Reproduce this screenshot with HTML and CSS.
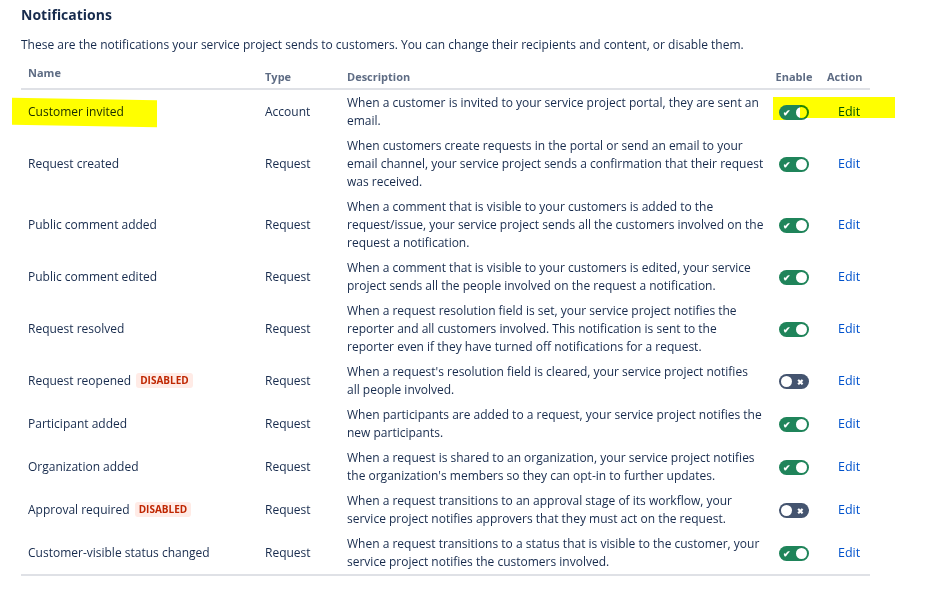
FILE: index.html
```html
<!DOCTYPE html>
<html>
<head>
  <title>Notifications</title>
  <link rel="stylesheet" href="styles.css">
</head>
<body>
  <div class="page">
    <h2 class="title">Notifications</h2>
    <p class="intro">These are the notifications your service project sends to customers. You can change their recipients and content, or disable them.</p>
    <table class="notif-table">
      <colgroup>
        <col class="col-name">
        <col class="col-type">
        <col class="col-desc">
        <col class="col-enable">
        <col class="col-action">
      </colgroup>
      <thead>
        <tr>
          <th class="th-name">Name</th>
          <th>Type</th>
          <th>Description</th>
          <th class="center">Enable</th>
          <th>Action</th>
        </tr>
      </thead>
      <tbody>
        <tr>
          <td class="marked"><span class="mark mark-name"></span>Customer invited</td>
          <td>Account</td>
          <td class="desc">When a customer is invited to your service project portal, they are sent an<br>email.</td>
          <td class="center marked"><span class="mark mark-toggle"></span><span class="toggle on"></span></td>
          <td class="marked"><span class="mark mark-edit"></span><a class="edit" href="#">Edit</a></td>
        </tr>
        <tr>
          <td>Request created</td>
          <td>Request</td>
          <td class="desc">When customers create requests in the portal or send an email to your<br>email channel, your service project sends a confirmation that their request<br>was received.</td>
          <td class="center"><span class="toggle on"></span></td>
          <td><a class="edit" href="#">Edit</a></td>
        </tr>
        <tr>
          <td>Public comment added</td>
          <td>Request</td>
          <td class="desc">When a comment that is visible to your customers is added to the<br>request/issue, your service project sends all the customers involved on the<br>request a notification.</td>
          <td class="center"><span class="toggle on"></span></td>
          <td><a class="edit" href="#">Edit</a></td>
        </tr>
        <tr>
          <td>Public comment edited</td>
          <td>Request</td>
          <td class="desc">When a comment that is visible to your customers is edited, your service<br>project sends all the people involved on the request a notification.</td>
          <td class="center"><span class="toggle on"></span></td>
          <td><a class="edit" href="#">Edit</a></td>
        </tr>
        <tr>
          <td>Request resolved</td>
          <td>Request</td>
          <td class="desc">When a request resolution field is set, your service project notifies the<br>reporter and all customers involved. This notification is sent to the<br>reporter even if they have turned off notifications for a request.</td>
          <td class="center"><span class="toggle on"></span></td>
          <td><a class="edit" href="#">Edit</a></td>
        </tr>
        <tr>
          <td>Request reopened <span class="badge">Disabled</span></td>
          <td>Request</td>
          <td class="desc">When a request's resolution field is cleared, your service project notifies<br>all people involved.</td>
          <td class="center"><span class="toggle off"></span></td>
          <td><a class="edit" href="#">Edit</a></td>
        </tr>
        <tr>
          <td>Participant added</td>
          <td>Request</td>
          <td class="desc">When participants are added to a request, your service project notifies the<br>new participants.</td>
          <td class="center"><span class="toggle on"></span></td>
          <td><a class="edit" href="#">Edit</a></td>
        </tr>
        <tr>
          <td>Organization added</td>
          <td>Request</td>
          <td class="desc">When a request is shared to an organization, your service project notifies<br>the organization's members so they can opt-in to further updates.</td>
          <td class="center"><span class="toggle on"></span></td>
          <td><a class="edit" href="#">Edit</a></td>
        </tr>
        <tr>
          <td>Approval required <span class="badge">Disabled</span></td>
          <td>Request</td>
          <td class="desc">When a request transitions to an approval stage of its workflow, your<br>service project notifies approvers that they must act on the request.</td>
          <td class="center"><span class="toggle off"></span></td>
          <td><a class="edit" href="#">Edit</a></td>
        </tr>
        <tr>
          <td>Customer-visible status changed</td>
          <td>Request</td>
          <td class="desc">When a request transitions to a status that is visible to the customer, your<br>service project notifies the customers involved.</td>
          <td class="center"><span class="toggle on"></span></td>
          <td><a class="edit" href="#">Edit</a></td>
        </tr>
      </tbody>
    </table>
  </div>
</body>
</html>
```

FILE: styles.css
```css
body {
  margin: 0;
  padding: 0;
  background-color: #ffffff;
  color: #172b4d;
  font-family: "Open Sans", "Noto Sans", sans-serif;
  font-size: 12px;
}

.page {
  padding: 5px 62px 0 21px;
}

.title {
  margin: 0;
  font-size: 14px;
  font-weight: 700;
  line-height: 20px;
}

.intro {
  margin: 11px 0 0 0;
  line-height: 18px;
}

.notif-table {
  margin-top: 7px;
  width: 849px;
  border-collapse: collapse;
  table-layout: fixed;
}

.col-name { width: 237px; }
.col-type { width: 82px; }
.col-desc { width: 428px; }
.col-enable { width: 52px; }
.col-action { width: 50px; }

.notif-table th {
  text-align: left;
  font-size: 11px;
  font-weight: 700;
  color: #5e6c84;
  padding: 4px 7px 3px 7px;
  line-height: 16px;
  border-bottom: 2px solid #dfe1e6;
  vertical-align: bottom;
}

.notif-table th.th-name {
  padding-bottom: 7px;
}

.notif-table td {
  padding: 4px 7px 3px 7px;
  line-height: 18px;
  vertical-align: middle;
  white-space: nowrap;
}

.notif-table tbody tr:last-child td {
  border-bottom: 2px solid #dfe1e6;
}

.notif-table .center {
  text-align: center;
}

.badge {
  display: inline-block;
  margin-left: 2px;
  padding: 0 4px;
  border-radius: 3px;
  background-color: #ffebe6;
  color: #bf2600;
  font-size: 10px;
  font-weight: 700;
  line-height: 15px;
  text-transform: uppercase;
  vertical-align: 1px;
}

.toggle {
  position: relative;
  display: inline-block;
  width: 30px;
  height: 15px;
  border-radius: 8px;
  vertical-align: middle;
}

.toggle::before {
  content: "";
  position: absolute;
  top: 2px;
  width: 11px;
  height: 11px;
  border-radius: 50%;
  background-color: #ffffff;
}

.toggle::after {
  position: absolute;
  top: 0;
  color: #ffffff;
  font-weight: 700;
  line-height: 15px;
}

.toggle.on {
  background-color: #1f845a;
}

.toggle.on::before {
  right: 2px;
}

.toggle.on::after {
  content: "\2714";
  left: 4px;
  font-size: 9px;
}

.toggle.off {
  background-color: #44546f;
}

.toggle.off::before {
  left: 2px;
}

.toggle.off::after {
  content: "\2716";
  right: 5px;
  font-size: 8px;
}

.edit {
  display: inline-block;
  padding-left: 11px;
  color: #0052cc;
  text-decoration: none;
  font-size: 12.5px;
}

/* yellow highlighter marks drawn over the first row */
.marked {
  position: relative;
}

.mark {
  position: absolute;
  background-color: #ffff00;
  mix-blend-mode: multiply;
  pointer-events: none;
}

.mark-name {
  left: -9px;
  top: 9px;
  width: 145px;
  height: 27px;
  transform: skewY(1deg);
}

.mark-toggle {
  left: 5px;
  top: 7px;
  width: 28px;
  height: 23px;
}

.mark-edit {
  left: -20px;
  top: 7px;
  width: 95px;
  height: 21px;
}
```
